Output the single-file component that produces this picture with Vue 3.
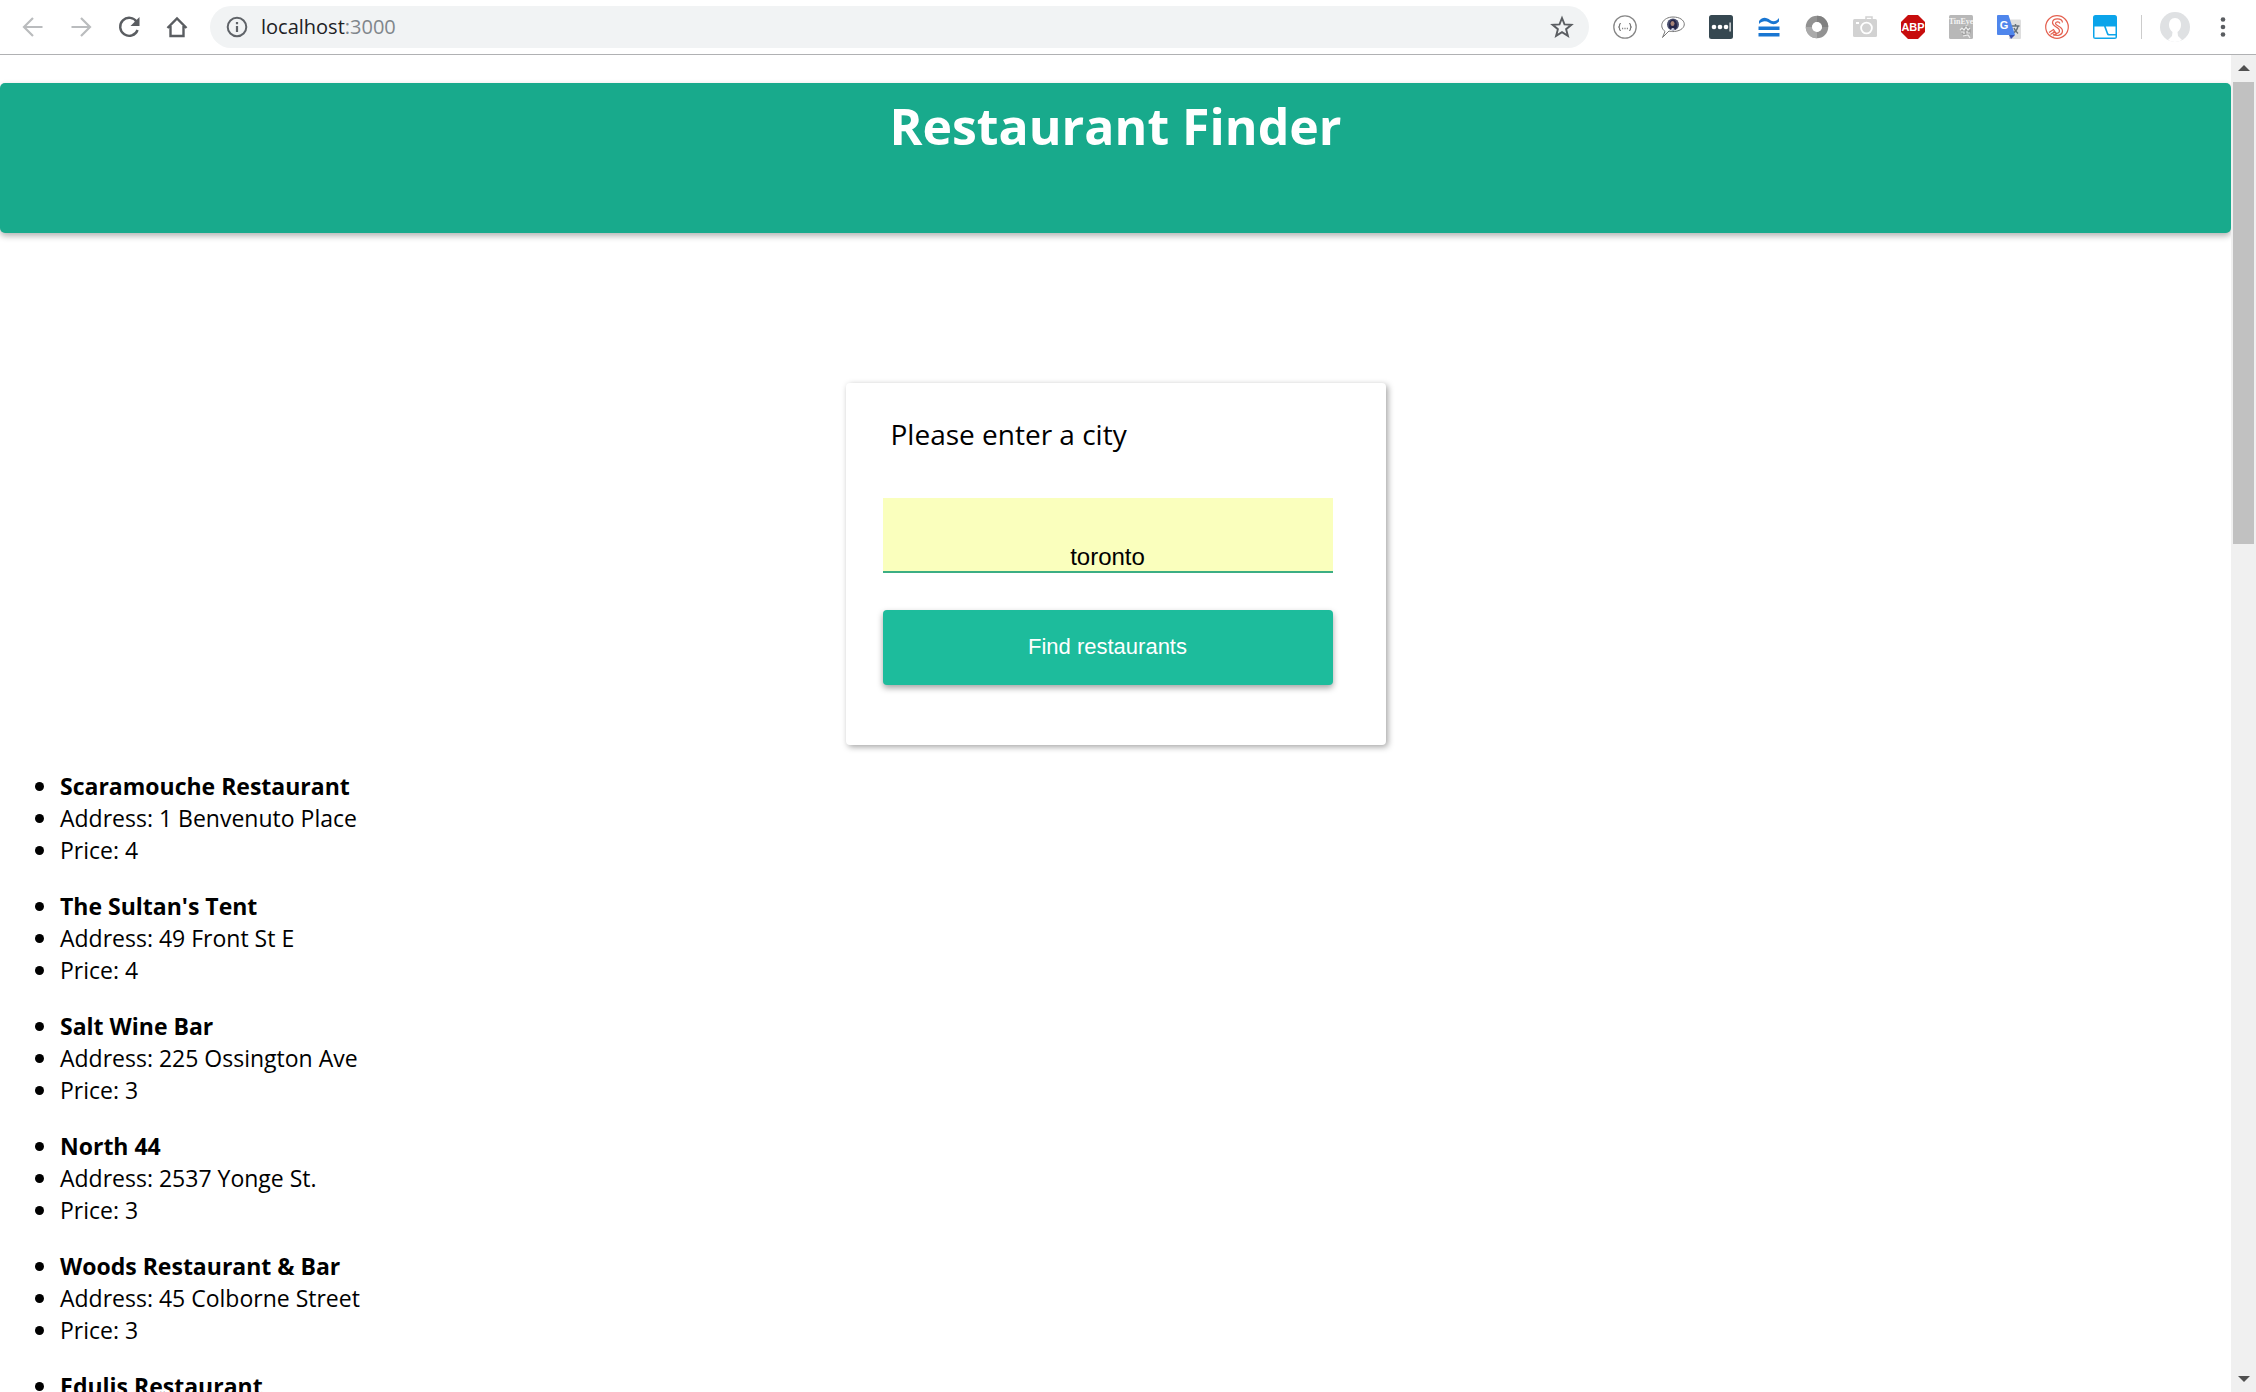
<script setup>
import { ref } from 'vue'

const city = ref('toronto')
const restaurants = [
  { name: 'Scaramouche Restaurant', address: '1 Benvenuto Place', price: 4 },
  { name: "The Sultan's Tent", address: '49 Front St E', price: 4 },
  { name: 'Salt Wine Bar', address: '225 Ossington Ave', price: 3 },
  { name: 'North 44', address: '2537 Yonge St.', price: 3 },
  { name: 'Woods Restaurant & Bar', address: '45 Colborne Street', price: 3 },
  { name: 'Edulis Restaurant', address: '169 Niagara Street', price: 3 }
]
</script>

<template>
  <div class="browser">
    <nav class="toolbar" aria-label="Browser toolbar">
      <div class="group">
        <button type="button" aria-label="Back">
          <svg viewBox="0 0 24 24"><path d="M21.500 12H3.500M12 3L3 12l9 9" fill="none" stroke="#babcbe" stroke-width="2.200" /></svg>
        </button>
        <button type="button" aria-label="Forward">
          <svg viewBox="0 0 24 24"><path d="M2.500 12h18M12 3l9 9-9 9" fill="none" stroke="#babcbe" stroke-width="2.200" /></svg>
        </button>
        <button type="button" aria-label="Reload">
          <svg viewBox="0 0 24 24">
            <path d="M19.800 7A9 9 0 1 0 20.600 15" fill="none" stroke="#5a5d61" stroke-width="2.400" />
            <path d="M22.500 2v9h-9z" fill="#5a5d61" />
          </svg>
        </button>
        <button type="button" aria-label="Home">
          <svg viewBox="0 0 24 24"><path d="M2.500 13L12 3.500l9.500 9.500M5.500 11v10h13V11" fill="none" stroke="#5a5d61" stroke-width="2.400" /></svg>
        </button>
      </div>
      <div class="address">
        <svg viewBox="0 0 24 24">
          <circle cx="12" cy="12" r="9.300" fill="none" stroke="#5f6368" stroke-width="2" />
          <path d="M12 7v2.200M12 11v6" stroke="#5f6368" stroke-width="2.200" />
        </svg>
        <span class="url">localhost<span class="port">:3000</span></span>
        <button type="button" aria-label="Bookmark this page">
          <svg viewBox="0 0 24 24"><path d="M12 3l2.500 6.400 6.900.4-5.300 4.400 1.800 6.700-5.900-3.800-5.900 3.800 1.800-6.700-5.300-4.400 6.900-.4z" fill="none" stroke="#5a5d61" stroke-width="1.900" /></svg>
        </button>
      </div>
      <div class="group">
        <button type="button" aria-label="JSON viewer">
          <svg viewBox="0 0 24 24">
            <circle cx="12" cy="12" r="11.200" fill="#fff" stroke="#888" stroke-width="1.300" />
            <path d="M8 8.500q-1.500 0-1.500 1.500v1q0 1-1.300 1 1.300 0 1.300 1v1q0 1.500 1.500 1.500M16 8.500q1.500 0 1.500 1.500v1q0 1 1.300 1-1.300 0-1.300 1v1q0 1.500-1.500 1.500" fill="none" stroke="#777" stroke-width="1.200" />
            <path d="M9 13.500h1.200M11.400 13.500h1.200M13.800 13.500H15" stroke="#888" stroke-width="1.300" />
          </svg>
        </button>
        <button type="button" aria-label="Chat">
          <svg viewBox="0 0 24 24">
            <path d="M1.500 22.500l2.500-6C-3 11 2 2 12 2c14 0 15.500 13 1.500 14.500-2.500.2-4 0-5.500-.5z" fill="#fff" stroke="#777" stroke-width="1" />
            <circle cx="12" cy="9.500" r="6" fill="#4b506e" />
            <path d="M8 12q0-7.500 4-7.500t4 7.500l-2 3h-4z" fill="#24264a" />
            <ellipse cx="11.500" cy="8.500" rx="2" ry="2.500" fill="#a88478" />
            <path d="M9.500 14.500q2.500-3 4.500 0l-2.500.5z" fill="#dcdff0" />
          </svg>
        </button>
        <button type="button" aria-label="Password manager">
          <svg viewBox="0 0 24 24">
            <rect width="24" height="24" rx="2.500" fill="#364851" />
            <g fill="#fff"><circle cx="5" cy="12" r="2.300" /><circle cx="11" cy="12" r="2.300" /><circle cx="17" cy="12" r="2.300" /><path d="M20.500 7.500h1.200v9h-1.200z" /></g>
          </svg>
        </button>
        <button type="button" aria-label="Approximate">
          <svg viewBox="0 0 24 24">
            <path d="M2 9V6C6 1 10 3 13 5s6 2 9-2v3.500c-4 4-7 3-10 1S5 5.500 2 9z" fill="#1976d2" />
            <path d="M1.500 11.500h21v3.500h-21zM1.500 18h21v3.500h-21z" fill="#1976d2" />
          </svg>
        </button>
        <button type="button" aria-label="Ring">
          <svg viewBox="0 0 24 24">
            <circle cx="12" cy="12" r="8" fill="none" stroke="#929292" stroke-width="6.500" />
            <path d="M12 4a8 8 0 0 1 8 8" fill="none" stroke="#808080" stroke-width="6.500" />
            <path d="M12 20a8 8 0 0 1-8-8" fill="none" stroke="#aaa" stroke-width="6.500" />
            <circle cx="12" cy="12" r="5" fill="#fff" />
          </svg>
        </button>
        <button type="button" aria-label="Screenshot">
          <svg viewBox="0 0 24 24">
            <rect y="4" width="24" height="18" rx="1.500" fill="#d2d2d2" />
            <path d="M13 4V2h6v2" fill="none" stroke="#d2d2d2" stroke-width="1.500" />
            <circle cx="13.500" cy="13" r="5.400" fill="none" stroke="#fff" stroke-width="1.800" />
            <path d="M3 8h3" stroke="#fff" stroke-width="2" />
          </svg>
        </button>
        <button type="button" aria-label="Ad blocker">
          <svg viewBox="0 0 24 24">
            <path d="M7 0h10l7 7v10l-7 7H7l-7-7V7z" fill="#c70d0d" />
            <text x="12" y="16" text-anchor="middle" font-size="11" font-weight="700" fill="#fff">ABP</text>
          </svg>
        </button>
        <button type="button" aria-label="TinEye">
          <svg viewBox="0 0 24 24">
            <rect width="24" height="24" rx="1.500" fill="#b8b8b8" />
            <text class="serif" x="12" y="9" text-anchor="middle" font-size="8" font-weight="700" fill="#f4f4f4">TinEye</text>
            <circle cx="17" cy="16" r="5" fill="#a2a2a2" />
            <path d="M11 15l2-2 2 2 2-3 2 3 2-2M12 17h3v2M18 16v2h3M14 21l5-1 2 3" fill="none" stroke="#eee" stroke-width="1.200" />
          </svg>
        </button>
        <button type="button" aria-label="Translate">
          <svg viewBox="0 0 24 24">
            <path d="M11 4.500h12q1 0 1 1V23q0 1-1 1H12z" fill="#dedede" />
            <path d="M14.500 11h8M18.500 9v2M21 11q-1 5-5 7M17 13q1 3 4 5.500" fill="none" stroke="#65717b" stroke-width="1.400" />
            <path d="M12 20h6l-4 4z" fill="#3a4fb0" />
            <path d="M1 0h10.500L18 20H1q-1 0-1-1V1q0-1 1-1z" fill="#4f86ec" />
            <text x="7" y="14" text-anchor="middle" font-size="11" font-weight="700" fill="#fff">G</text>
          </svg>
        </button>
        <button type="button" aria-label="Script tool">
          <svg viewBox="0 0 24 24" fill="none" stroke="#e4604f">
            <circle cx="12" cy="12" r="11.300" stroke-width="1.200" />
            <path d="M17.500 7.500C17 3 8 2.500 7.500 7.500c-.3 4.500 7.500 4.500 7 8.500-.4 3-4.500 3-6 .5" stroke-width="1.200" />
            <path d="M15 8.500c-1-2.500-4.500-2-4.500 0 0 2.500 7 3 7 7.500 0 4-5.500 6-9.500 3M4 17.500l4.500-3 3 4.500-3.500 2M5.500 19.500l4.500-3" stroke-width="1.200" />
          </svg>
        </button>
        <button type="button" aria-label="Window capture">
          <svg viewBox="0 0 24 24">
            <rect width="24" height="24" rx="2.500" fill="#0ba4ea" />
            <path d="M1.500 11.500H11l3 8q.4 1 1.500 1h7v2h-21zM12.800 11.500h9.700V19h-6q-1 0-1.300-.8z" fill="#fff" />
          </svg>
        </button>
      </div>
      <div class="profile">
        <button type="button" class="avatar" aria-label="Profile">
          <svg viewBox="0 0 30 30">
            <circle cx="15" cy="15" r="15" fill="#dfe1e3" />
            <path d="M15 6c-4 0-6 3-6 7 0 3 1.500 5.500 3.500 7L12 24l-4 4q7 4 14 0l-4-4-.5-4c2-1.500 3.500-4 3.500-7 0-4-2-7-6-7z" fill="#fff" />
          </svg>
        </button>
        <button type="button" aria-label="Menu">
          <svg viewBox="0 0 24 24" fill="#5a5d61"><circle cx="12" cy="4.500" r="2.300" /><circle cx="12" cy="12" r="2.300" /><circle cx="12" cy="19.500" r="2.300" /></svg>
        </button>
      </div>
    </nav>

    <div class="viewport">
      <main class="page">
        <header class="banner"><h1>Restaurant Finder</h1></header>
        <form class="card" @submit.prevent>
          <label for="city">Please enter a city</label>
          <input id="city" v-model="city" type="text" autocomplete="off" />
          <button type="submit">Find restaurants</button>
        </form>
        <ul v-for="r in restaurants" :key="r.name" class="restaurant">
          <li><strong>{{ r.name }}</strong></li>
          <li>Address: {{ r.address }}</li>
          <li>Price: {{ r.price }}</li>
        </ul>
      </main>
      <div class="scrollbar" aria-hidden="true">
        <svg viewBox="0 0 25 27"><path d="M7 16l6-6 6 6z" fill="#505050" /></svg>
        <div class="track"><div class="thumb"></div></div>
        <svg viewBox="0 0 25 27"><path d="M7 11l6 6 6-6z" fill="#505050" /></svg>
      </div>
    </div>
  </div>
</template>

<style>
body {
  margin: 0;
  background: #fff;
}
</style>

<style scoped>
.browser {
  display: flex;
  flex-direction: column;
  height: 100vh;
  overflow: hidden;
  color: #000;
  font-family: "Open Sans", "Noto Sans", sans-serif;
}
.toolbar {
  display: flex;
  flex: none;
  align-items: center;
  box-sizing: border-box;
  height: 55px;
  padding: 0 21px;
  border-bottom: 1px solid #b0b1b3;
}
.toolbar button {
  display: block;
  flex: none;
  padding: 0;
  border: 0;
  background: none;
}
.toolbar svg {
  display: block;
  flex: none;
  width: 24px;
  height: 24px;
}
.toolbar .avatar svg {
  width: 30px;
  height: 30px;
}
.serif {
  font-family: "Liberation Serif", serif;
}
.group {
  display: flex;
  gap: 24px;
}
.address {
  display: flex;
  flex: 1;
  align-items: center;
  gap: 12px;
  height: 42px;
  margin: 0 24px 0 21px;
  padding: 0 15px;
  border-radius: 21px;
  background: #f1f3f4;
}
.url {
  flex: 1;
  color: #202124;
  font-size: 20px;
  line-height: 28px;
}
.port {
  color: #80868b;
}
.profile {
  display: flex;
  align-items: center;
  gap: 21px;
  margin-left: 24px;
  padding-left: 19px;
  background: linear-gradient(#ccc, #ccc) left center / 1px 24px no-repeat;
}
.viewport {
  display: flex;
  flex: 1;
  min-height: 0;
}
.page {
  flex: 1;
  overflow: hidden;
}
.banner {
  height: 150px;
  margin: 28px 0 150px;
  border-radius: 5px;
  background: #18aa8c;
  box-shadow: 0 3px 6px rgba(0, 0, 0, 0.3);
}
h1 {
  margin: 0;
  padding-top: 6px;
  color: #fff;
  font-size: 50px;
  line-height: 74px;
  text-align: center;
}
.card {
  display: flex;
  flex-direction: column;
  box-sizing: border-box;
  width: 540px;
  margin: 0 auto 24px;
  padding: 29px 53px 60px 37px;
  border-radius: 4px;
  box-shadow: 2px 2px 6px rgba(0, 0, 0, 0.36);
}
.card label {
  margin: 0 0 42px 8px;
  font-size: 28px;
  line-height: 44px;
}
.card input {
  box-sizing: border-box;
  height: 75px;
  margin-bottom: 37px;
  padding: 45px 0 0;
  border: 0;
  border-bottom: 2px solid #3cae84;
  outline: 0;
  background: #faffbd;
  color: #000;
  font: 24px "Liberation Sans", sans-serif;
  text-align: center;
}
.card button {
  height: 75px;
  padding: 0 0 2px;
  border: 0;
  border-radius: 4px;
  background: #1dbc9c;
  box-shadow: 0 3px 6px rgba(0, 0, 0, 0.36);
  color: #fff;
  font: 22px "Liberation Sans", sans-serif;
}
.restaurant {
  margin: 0 0 24px;
  padding-left: 60px;
  font-size: 23px;
  line-height: 32px;
}
.restaurant li {
  height: 32px;
}
.restaurant li::marker {
  font-size: 26px;
}
.scrollbar {
  display: flex;
  flex: none;
  flex-direction: column;
  width: 25px;
  background: #f0f0f0;
}
.scrollbar svg {
  width: 25px;
  height: 27px;
}
.track {
  flex: 1;
  padding: 0 2px;
}
.thumb {
  height: 36%;
  background: #c1c1c1;
}
</style>
